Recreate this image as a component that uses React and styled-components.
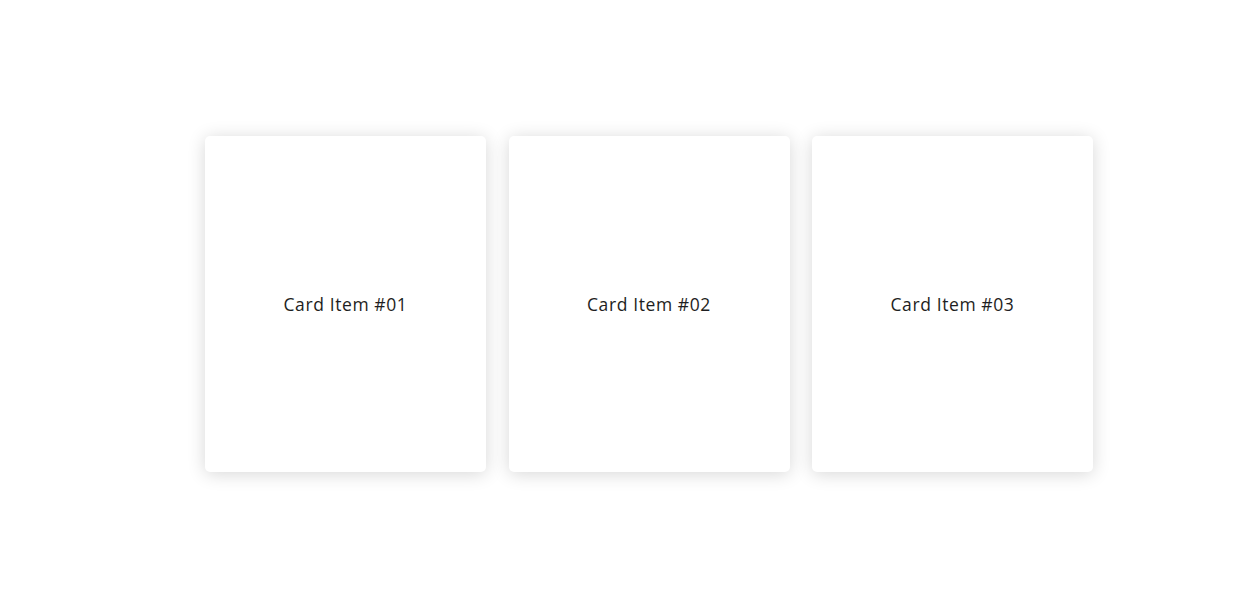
import React from "react";
import styled, { createGlobalStyle } from "styled-components";

const Global = createGlobalStyle`
  html, body { margin: 0; padding: 0; background: #fff; }
  body { font-family: "Open Sans", "Liberation Sans", sans-serif; }
`;

const Page = styled.div`
  width: 1259px;
  height: 605px;
  box-sizing: border-box;
  padding: 136px 0 0 205px;
`;

const Row = styled.div`
  display: flex;
  gap: 22.5px;
`;

const Card = styled.div`
  width: 281px;
  height: 336px;
  background: #fff;
  border-radius: 5px;
  box-shadow: 0 2px 18px rgba(0, 0, 0, 0.16);
  display: flex;
  align-items: center;
  justify-content: center;
  font-size: 17.5px;
  color: #1e1e22;
  letter-spacing: 0.6px;
`;

export default function App() {
  return (
    <>
      <Global />
      <Page>
        <Row>
          {["01", "02", "03"].map((n) => (
            <Card key={n}>Card Item #{n}</Card>
          ))}
        </Row>
      </Page>
    </>
  );
}
